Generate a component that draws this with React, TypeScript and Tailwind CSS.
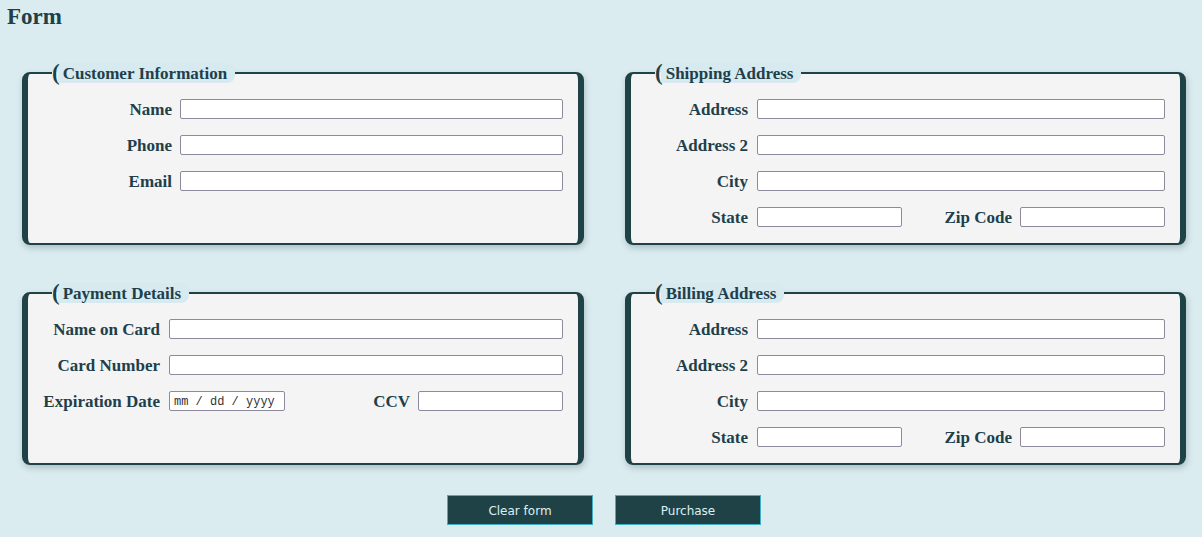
import React from 'react';

type Row = {
  label: string;
  input: number;
  extra?: { label: string; input: number };
  placeholder?: string;
};

type Section = {
  title: string;
  labelWidth: number;
  gap: number;
  width: number;
  rows: Row[];
};

const SECTIONS: Section[] = [
  {
    title: 'Customer Information',
    labelWidth: 144,
    gap: 8,
    width: 535,
    rows: [
      { label: 'Name', input: 383 },
      { label: 'Phone', input: 383 },
      { label: 'Email', input: 383 },
    ],
  },
  {
    title: 'Shipping Address',
    labelWidth: 117,
    gap: 9,
    width: 534,
    rows: [
      { label: 'Address', input: 408 },
      { label: 'Address 2', input: 408 },
      { label: 'City', input: 408 },
      { label: 'State', input: 145, extra: { label: 'Zip Code', input: 145 } },
    ],
  },
  {
    title: 'Payment Details',
    labelWidth: 132,
    gap: 9,
    width: 535,
    rows: [
      { label: 'Name on Card', input: 394 },
      { label: 'Card Number', input: 394 },
      { label: 'Expiration Date', input: 116, placeholder: 'mm / dd / yyyy', extra: { label: 'CCV', input: 145 } },
    ],
  },
  {
    title: 'Billing Address',
    labelWidth: 117,
    gap: 9,
    width: 534,
    rows: [
      { label: 'Address', input: 408 },
      { label: 'Address 2', input: 408 },
      { label: 'City', input: 408 },
      { label: 'State', input: 145, extra: { label: 'Zip Code', input: 145 } },
    ],
  },
];

const inputCls =
  'h-5 shrink-0 border border-[#8e8a9d] rounded-[2px] bg-white px-1 text-[13px] font-normal outline-none';

const FormSection: React.FC<{ section: Section }> = ({ section }) => (
  <fieldset className="border-x-[6px] border-y-2 border-[#1f4247] rounded-lg bg-[#f4f4f4] shadow-[1px_3px_6px_rgba(30,60,70,0.25)] px-0 min-w-0">
    <legend className="ml-6 h-5 flex items-center">
      <span className="text-[23px] leading-5 font-bold text-[#1f4247] -mr-[2px] relative z-10">(</span>
      <span className="bg-[#d6eaef] rounded-r-lg pl-[5px] pr-2 h-5 flex items-center pt-[2px] text-[17px]">
        {section.title}
      </span>
    </legend>
    <div className="h-[160px] pt-4 flex flex-col gap-4">
      {section.rows.map((row) => (
        <div key={row.label} className="flex items-center h-5" style={{ width: section.width }}>
          <label
            className="text-right shrink-0 pt-[2px]"
            style={{ width: section.labelWidth, marginRight: section.gap }}
          >
            {row.label}
          </label>
          <input
            type="text"
            placeholder={row.placeholder}
            className={`${inputCls} placeholder:text-[#333] placeholder:font-['Liberation_Mono',monospace] placeholder:text-[12px]`}
            style={{ width: row.input }}
          />
          {row.extra && (
            <>
              <label className="flex-1 text-right mr-2 pt-[2px]">{row.extra.label}</label>
              <input type="text" className={inputCls} style={{ width: row.extra.input }} />
            </>
          )}
        </div>
      ))}
    </div>
  </fieldset>
);

export default function App() {
  return (
    <div className="min-h-[537px] bg-[#dbecf0] font-['Liberation_Serif',serif] font-bold text-[17px] text-[#213f4a]">
      <h1 className="pl-[7px] pt-1 text-[23px] leading-[26px] font-bold text-[#213f4a]">Form</h1>
      <div className="mt-[33px] pl-[22px] grid grid-cols-[562px_561px] gap-x-[41px] gap-y-[38px]">
        {SECTIONS.map((s) => (
          <FormSection key={s.title} section={s} />
        ))}
      </div>
      <div className="mt-[30px] flex justify-center gap-[22px] pl-[6px] font-['DejaVu_Sans',sans-serif] font-normal">
        <button className="w-[146px] h-[30px] pt-[1px] bg-[#1f4247] border border-[#3fb0c8] text-[#dcf0f2] text-[12px]">
          Clear form
        </button>
        <button className="w-[146px] h-[30px] pt-[1px] bg-[#1f4247] border border-[#3fb0c8] text-[#dcf0f2] text-[12px]">
          Purchase
        </button>
      </div>
    </div>
  );
}
